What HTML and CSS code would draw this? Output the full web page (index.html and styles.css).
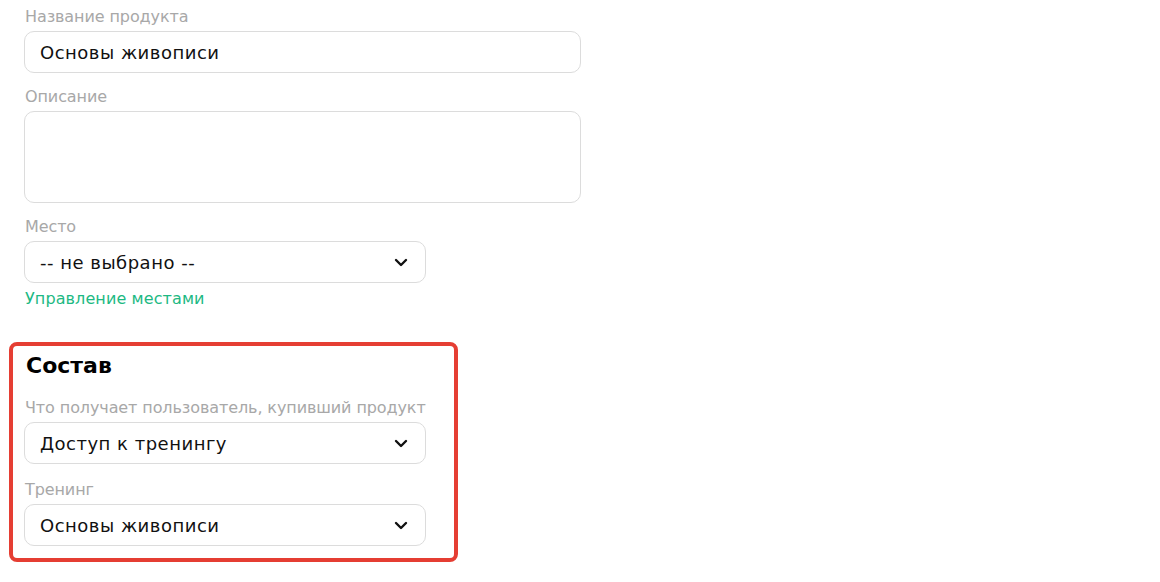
FILE: index.html
```html
<!DOCTYPE html>
<html lang="ru">
<head>
<meta charset="utf-8">
<link rel="stylesheet" href="styles.css">
</head>
<body>
<div class="form">
  <div class="field">
    <div class="label">Название продукта</div>
    <div class="input wide">Основы живописи</div>
  </div>
  <div class="field">
    <div class="label">Описание</div>
    <div class="textarea wide"></div>
  </div>
  <div class="field">
    <div class="label">Место</div>
    <div class="input select">
      <span>-- не выбрано --</span>
      <svg class="chev" width="14" height="9" viewBox="0 0 14 9"><path d="M2 2 L7 7 L12 2" fill="none" stroke="#111" stroke-width="2.4" stroke-linecap="round" stroke-linejoin="round"/></svg>
    </div>
    <a class="link">Управление местами</a>
  </div>
  <div class="box">
    <h2 class="title">Состав</h2>
    <div class="field first">
      <div class="label">Что получает пользователь, купивший продукт</div>
      <div class="input select">
        <span>Доступ к тренингу</span>
        <svg class="chev" width="14" height="9" viewBox="0 0 14 9"><path d="M2 2 L7 7 L12 2" fill="none" stroke="#111" stroke-width="2.4" stroke-linecap="round" stroke-linejoin="round"/></svg>
      </div>
    </div>
    <div class="field">
      <div class="label">Тренинг</div>
      <div class="input select">
        <span>Основы живописи</span>
        <svg class="chev" width="14" height="9" viewBox="0 0 14 9"><path d="M2 2 L7 7 L12 2" fill="none" stroke="#111" stroke-width="2.4" stroke-linecap="round" stroke-linejoin="round"/></svg>
      </div>
    </div>
  </div>
</div>
</body>
</html>
```
FILE: styles.css
```css
html, body {
  margin: 0;
  padding: 0;
  background: #fff;
}
body {
  font-family: "DejaVu Sans", sans-serif;
  color: #111;
}
.form {
  display: flex;
  flex-direction: column;
  padding: 6px 0 0 9px;
}
.field {
  display: flex;
  flex-direction: column;
  padding-left: 15px;
  margin-bottom: 13px;
}
.label {
  font-size: 16px;
  line-height: 20px;
  color: #a8a8a8;
  margin-bottom: 4px;
  padding: 1px 0 0 1px;
  letter-spacing: -0.1px;
}
.input {
  box-sizing: border-box;
  height: 42px;
  border: 1px solid #dcdcdc;
  border-radius: 10px;
  padding: 0 15px;
  display: flex;
  align-items: center;
  font-size: 18px;
  letter-spacing: 0.5px;
  color: #111;
  width: 402px;
}
.wide {
  width: 557px;
}
.textarea {
  box-sizing: border-box;
  height: 92px;
  border: 1px solid #dcdcdc;
  border-radius: 10px;
}
.select {
  justify-content: space-between;
  padding-right: 17px;
}
.link {
  margin-top: 6px;
  font-size: 16px;
  line-height: 20px;
  color: #1db983;
  letter-spacing: 0.1px;
  padding-left: 1px;
}
.box {
  margin-top: 20px;
  width: 449px;
  box-sizing: border-box;
  border: 4px solid #e53e33;
  border-radius: 8px;
  padding: 6px 0 0 0;
  display: flex;
  flex-direction: column;
}
.box .field {
  padding-left: 11px;
  margin-bottom: 12px;
}
.box .field.first {
  margin-bottom: 15px;
}
.title {
  margin: 0 0 17px 13px;
  font-size: 22px;
  line-height: 28px;
  font-weight: bold;
  color: #000;
}
```
